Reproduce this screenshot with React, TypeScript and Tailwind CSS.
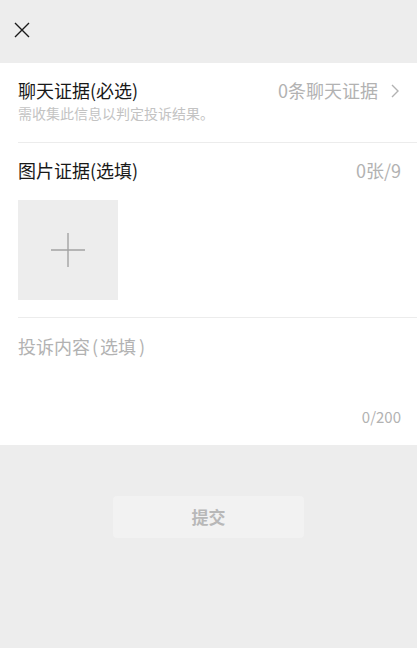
import React from "react";

export default function App() {
  const font = { fontFamily: '"Noto Sans CJK SC", "Noto Sans", sans-serif' };
  return (
    <div className="w-[417px] h-[648px] bg-[#ededed] flex flex-col" style={font}>
      <div className="h-[63px] flex items-center pl-[14px]">
        <svg width="16" height="16" viewBox="0 0 16 16" className="mt-[-4px]">
          <path d="M1 1 L15 15 M15 1 L1 15" stroke="#1a1a1a" strokeWidth="1.4" fill="none" />
        </svg>
      </div>
      <div className="bg-white pl-[18px]">
        <div className="h-[80px] flex items-start justify-between pr-[18px] pt-[15px] border-b border-[#ececec]">
          <div className="flex flex-col">
            <div className="text-[18px] leading-[24px] text-[#191919]">聊天证据(必选)</div>
            <div className="text-[14px] leading-[18px] text-[#c3c3c3] mt-[2px]">需收集此信息以判定投诉结果。</div>
          </div>
          <div className="flex items-center text-[18px] leading-[24px] text-[#b2b2b2]">
            <span>0条聊天证据</span>
            <svg width="8" height="14" viewBox="0 0 8 14" className="ml-[13px] mt-[1px]">
              <path d="M1 1 L7 7 L1 13" stroke="#b2b2b2" strokeWidth="1.4" fill="none" />
            </svg>
          </div>
        </div>
        <div className="h-[175px] pr-[16px] pt-[15px] border-b border-[#ececec]">
          <div className="flex justify-between text-[18px] leading-[24px]">
            <span className="text-[#191919]">图片证据(选填)</span>
            <span className="text-[#b2b2b2]">0张/9</span>
          </div>
          <div className="w-[100px] h-[100px] bg-[#ededed] mt-[18px] flex items-center justify-center">
            <svg width="34" height="34" viewBox="0 0 34 34">
              <path d="M0 17 H34 M17 0 V34" stroke="#a3a3a3" strokeWidth="1.4" fill="none" />
            </svg>
          </div>
        </div>
        <div className="h-[127px] pr-[16px] pt-[16px] flex flex-col">
          <div className="text-[18px] leading-[24px] text-[#b2b2b2]">
            投诉内容<span className="ml-[2px] mr-[2px]">(</span>选填<span className="ml-[3px]">)</span>
          </div>
          <div className="mt-auto mb-[18px] text-right text-[15px] leading-[20px] text-[#b2b2b2]">0/200</div>
        </div>
      </div>
      <div className="flex justify-center mt-[51px]">
        <div className="w-[191px] h-[42px] bg-[#f2f2f2] rounded-[4px] flex items-center justify-center text-[17px] font-bold text-[#b8b8b8]">
          提交
        </div>
      </div>
    </div>
  );
}
